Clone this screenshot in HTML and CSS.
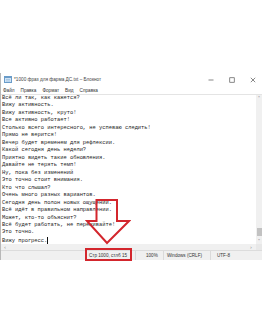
FILE: index.html
```html
<!DOCTYPE html>
<html lang="ru">
<head>
<meta charset="utf-8">
<title>Блокнот</title>
<link rel="stylesheet" href="styles.css">
</head>
<body>
<div class="page">
  <div class="window">
    <div class="titlebar">
      <svg class="app-icon" width="8" height="7" viewBox="0 0 8 7">
        <rect x="0.5" y="0.5" width="7" height="6" fill="#cfe3f5" stroke="#6a9cc9" stroke-width="1"/>
        <rect x="0.5" y="0.5" width="7" height="1.5" fill="#6a9cc9"/>
        <line x1="2" y1="3.5" x2="6" y2="3.5" stroke="#8fb3d6" stroke-width="0.6"/>
        <line x1="2" y1="5" x2="6" y2="5" stroke="#8fb3d6" stroke-width="0.6"/>
      </svg>
      <span class="title">*1000 фраз для фарма ДС.txt – Блокнот</span>
      <div class="controls">
        <svg class="ctl" width="6" height="6" viewBox="0 0 6 6"><line x1="0.5" y1="3" x2="5.5" y2="3" stroke="#555" stroke-width="0.7"/></svg>
        <svg class="ctl" width="6" height="6" viewBox="0 0 6 6"><rect x="0.75" y="0.75" width="4.5" height="4.5" fill="none" stroke="#555" stroke-width="0.7"/></svg>
        <svg class="ctl" width="6" height="6" viewBox="0 0 6 6"><path d="M0.8 0.8 L5.2 5.2 M5.2 0.8 L0.8 5.2" stroke="#555" stroke-width="0.7"/></svg>
      </div>
    </div>
    <div class="menubar">
      <span>Файл</span><span>Правка</span><span>Формат</span><span>Вид</span><span>Справка</span>
    </div>
    <div class="editor">
      <div class="text">
        <div class="line">Всё ли так, как кажется?</div>
        <div class="line">Вижу активность.</div>
        <div class="line">Вижу активность, круто!</div>
        <div class="line">Все активно работает!</div>
        <div class="line">Столько всего интересного, не успеваю следить!</div>
        <div class="line">Прямо не верится!</div>
        <div class="line">Вечер будет временем для рефлексии.</div>
        <div class="line">Какой сегодня день недели?</div>
        <div class="line">Приятно видеть такие обновления.</div>
        <div class="line">Давайте не терять темп!</div>
        <div class="line">Ну, пока без изменений</div>
        <div class="line">Это точно стоит внимания.</div>
        <div class="line">Кто что слышал?</div>
        <div class="line">Очень много разных вариантов.</div>
        <div class="line">Сегодня день полон новых ощущений.</div>
        <div class="line">Всё идёт в правильном направлении.</div>
        <div class="line">Может, кто-то объяснит?</div>
        <div class="line">Всё будет работать, не переживайте!</div>
        <div class="line">Это точно.</div>
        <div class="line">Вижу прогресс.<span class="caret"></span></div>
      </div>
      <div class="vscroll">
        <span class="arr">˄</span>
        <div class="track"><div class="thumb"></div></div>
        <span class="arr">˅</span>
      </div>
    </div>
    <div class="hscroll">
      <span class="harr">‹</span>
      <span class="harr right">›</span>
      <span class="corner"></span>
    </div>
    <div class="statusbar">
      <div class="cell blank"></div>
      <div class="cell pos">Стр 1000, стлб 15</div>
      <div class="cell zoom">100%</div>
      <div class="cell eol">Windows (CRLF)</div>
      <div class="cell enc">UTF-8</div>
    </div>
  </div>
  <svg class="arrow" width="46" height="48" viewBox="85 198 46 48">
    <polygon points="96.5,200 117,200 117,221 129,221 107,243 87,221 96.5,221" fill="none" stroke="#d3262d" stroke-width="2" stroke-linejoin="miter"/>
  </svg>
  <div class="highlight"></div>
</div>
</body>
</html>
```
FILE: styles.css
```css
html, body {
  margin: 0;
  padding: 0;
  background: #ffffff;
  overflow: hidden;
}
.page {
  position: relative;
  width: 262px;
  height: 334px;
  padding-top: 73px;
  box-sizing: border-box;
}
.window {
  width: 262px;
  height: 187px;
  display: flex;
  flex-direction: column;
  border-left: 1px solid #b8b8b8;
  box-sizing: border-box;
  background: #fff;
  font-family: "Liberation Sans", Arial, sans-serif;
}
.titlebar {
  height: 13px;
  display: flex;
  align-items: center;
  padding-left: 3px;
  gap: 2px;
}
.app-icon { flex: none; }
.title {
  font-size: 4.7px;
  color: #444;
  white-space: nowrap;
}
.controls {
  margin-left: auto;
  display: flex;
  gap: 15px;
  padding-right: 6px;
  align-items: center;
}
.menubar {
  height: 8px;
  display: flex;
  align-items: center;
  gap: 6px;
  padding-left: 2px;
  font-size: 4.7px;
  color: #333;
}
.editor {
  height: 150px;
  display: flex;
  border-top: 1px solid #e4e4e4;
  box-sizing: border-box;
}
.text {
  flex: 1;
  padding-left: 1px;
  font-family: "Liberation Mono", "Courier New", monospace;
  font-size: 5.4px;
  line-height: 7.47px;
  color: #1e1e1e;
  overflow: hidden;
}
.line {
  white-space: nowrap;
  height: 7.47px;
}
.caret {
  display: inline-block;
  width: 0;
  height: 7px;
  border-left: 1px solid #111;
  vertical-align: -2px;
}
.vscroll {
  width: 6px;
  background: #f0f0f0;
  display: flex;
  flex-direction: column;
  align-items: center;
}
.arr {
  font-size: 5px;
  line-height: 6px;
  color: #777;
  font-family: "DejaVu Sans", sans-serif;
}
.track {
  flex: 1;
  width: 100%;
  display: flex;
  flex-direction: column;
  justify-content: flex-end;
}
.thumb {
  height: 8px;
  margin: 0 0.5px 2px;
  background: #c2c2c2;
}
.hscroll {
  height: 6px;
  background: #f0f0f0;
  display: flex;
  align-items: center;
  padding-left: 3px;
  font-size: 5px;
  color: #888;
  font-family: "DejaVu Sans", sans-serif;
}
.harr { line-height: 6px; }
.harr.right { margin-left: auto; margin-right: 4px; }
.corner {
  width: 6px;
  height: 6px;
  background: #e8e8e8;
}
.statusbar {
  height: 10px;
  display: grid;
  grid-template-columns: 84px 50px 28px 47px 1fr;
  background: #f0f0f0;
  border-top: 1px solid #dcdcdc;
  box-sizing: border-box;
  font-size: 4.6px;
  color: #333;
}
.cell {
  display: flex;
  align-items: center;
  white-space: nowrap;
  border-left: 1px solid #dadada;
}
.cell.blank { border-left: none; }
.cell.pos { padding-left: 3px; }
.cell.zoom { padding-left: 10px; }
.cell.eol { padding-left: 3px; }
.cell.enc { padding-left: 6px; }
.arrow {
  position: absolute;
  left: 85px;
  top: 198px;
  pointer-events: none;
}
.highlight {
  position: absolute;
  left: 85px;
  top: 248px;
  width: 47px;
  height: 13px;
  border: 2px solid #d3262d;
  box-sizing: border-box;
}
```
